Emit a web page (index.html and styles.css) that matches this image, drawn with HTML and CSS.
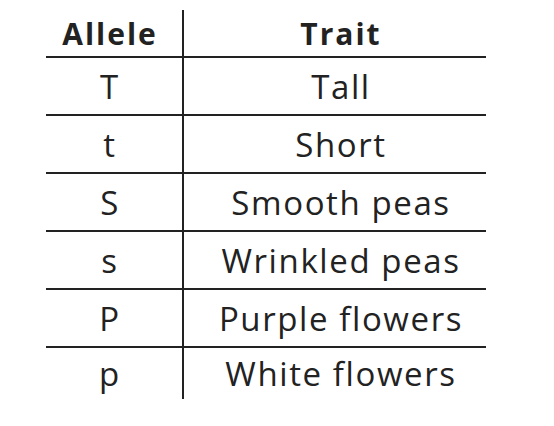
FILE: index.html
```html
<!DOCTYPE html>
<html>
<head>
<meta charset="utf-8">
<link rel="stylesheet" href="styles.css">
</head>
<body>
<table class="traits">
  <thead>
    <tr><th class="c-allele">Allele</th><th class="c-trait">Trait</th></tr>
  </thead>
  <tbody>
    <tr><td class="c-allele">T</td><td class="c-trait">Tall</td></tr>
    <tr><td class="c-allele">t</td><td class="c-trait">Short</td></tr>
    <tr><td class="c-allele">S</td><td class="c-trait">Smooth peas</td></tr>
    <tr><td class="c-allele">s</td><td class="c-trait">Wrinkled peas</td></tr>
    <tr><td class="c-allele">P</td><td class="c-trait">Purple flowers</td></tr>
    <tr class="last"><td class="c-allele">p</td><td class="c-trait">White flowers</td></tr>
  </tbody>
</table>
</body>
</html>
```
FILE: styles.css
```css
html, body {
  margin: 0;
  padding: 0;
  background: #fff;
}
body {
  padding: 10px 0 0 46px;
  font-family: "Open Sans", "Liberation Sans", sans-serif;
  color: #222;
}
.traits {
  border-collapse: collapse;
  border-spacing: 0;
}
.traits th, .traits td {
  padding: 0;
  text-align: center;
  vertical-align: middle;
}
.traits th {
  font-size: 30px;
  font-weight: 700;
  letter-spacing: 2px;
  height: 46px;
  border-bottom: 2px solid #222;
}
.traits td {
  font-size: 33px;
  font-weight: 400;
  letter-spacing: 1.6px;
  height: 56px;
  border-bottom: 2px solid #222;
}
.traits tr.last td {
  border-bottom: none;
  height: 51px;
}
.c-allele {
  width: 128px;
  padding-right: 8px !important;
  border-right: 2px solid #222;
}
.c-trait {
  width: 290px;
  padding-left: 12px !important;
}
```
